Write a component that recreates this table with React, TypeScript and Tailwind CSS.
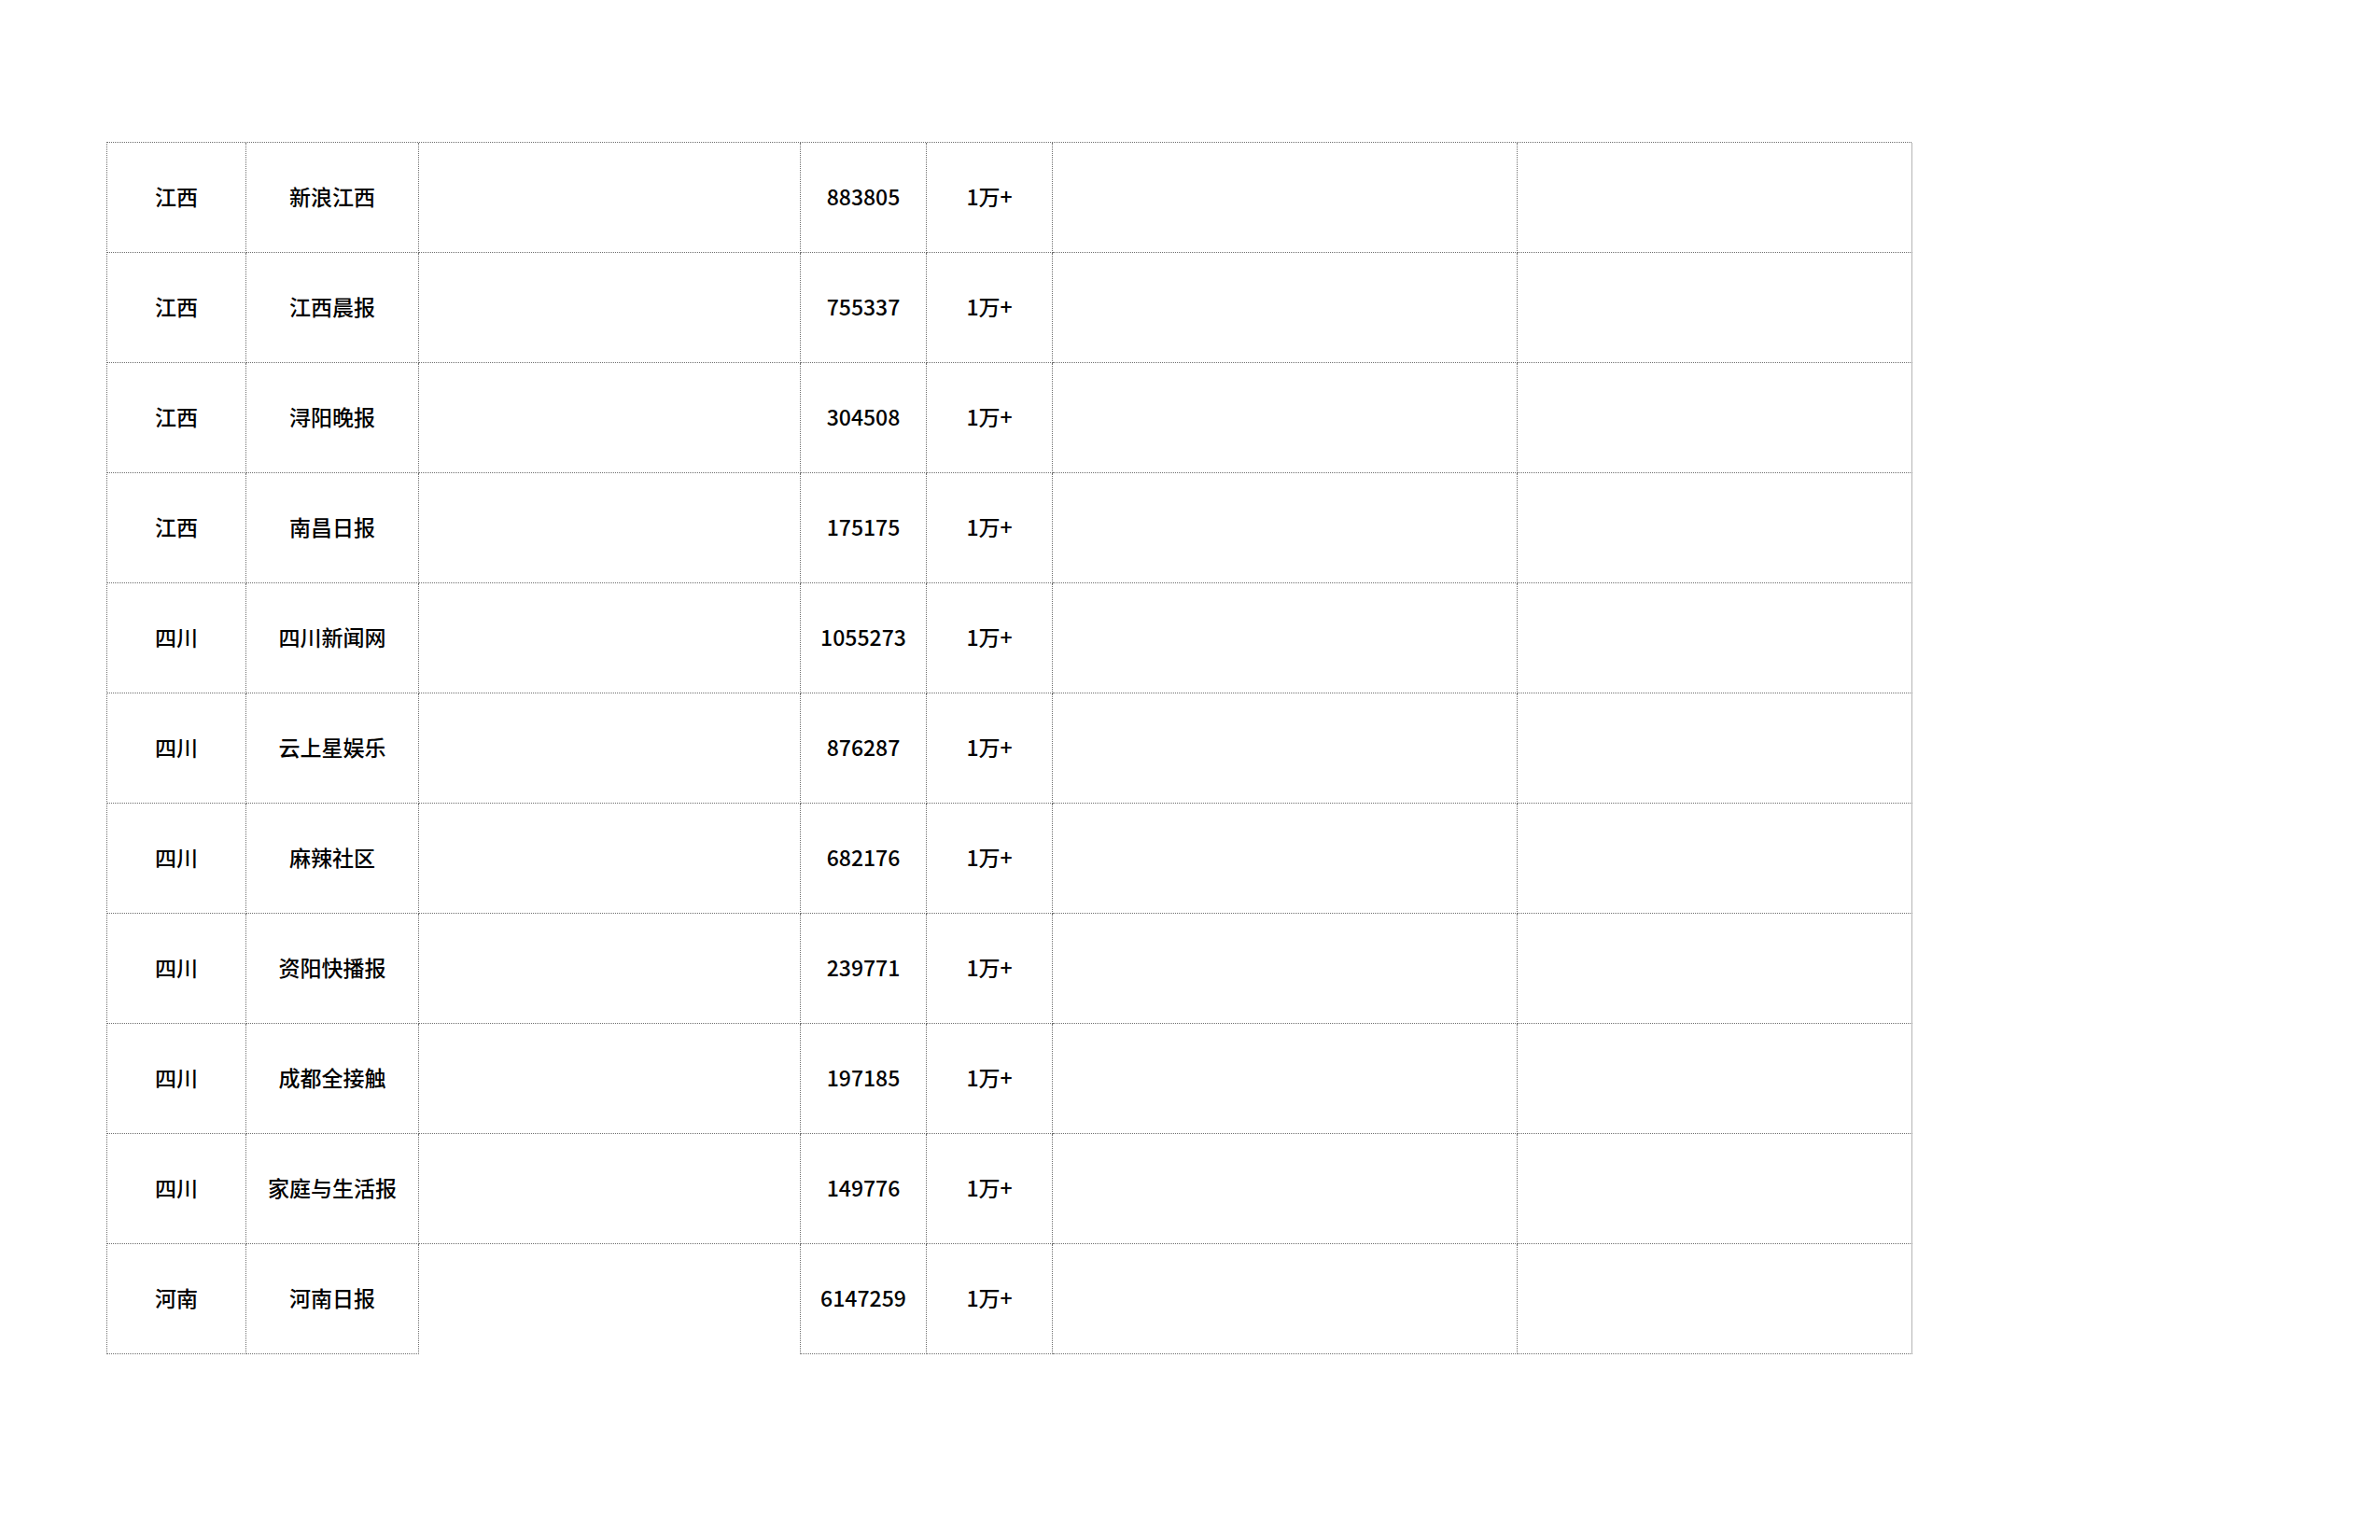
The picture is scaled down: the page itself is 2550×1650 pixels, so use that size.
import React from 'react';

type Row = { province: string; name: string; count: string; fans: string };

const rows: Row[] = [
  { province: '江西', name: '新浪江西', count: '883805', fans: '1万+' },
  { province: '江西', name: '江西晨报', count: '755337', fans: '1万+' },
  { province: '江西', name: '浔阳晚报', count: '304508', fans: '1万+' },
  { province: '江西', name: '南昌日报', count: '175175', fans: '1万+' },
  { province: '四川', name: '四川新闻网', count: '1055273', fans: '1万+' },
  { province: '四川', name: '云上星娱乐', count: '876287', fans: '1万+' },
  { province: '四川', name: '麻辣社区', count: '682176', fans: '1万+' },
  { province: '四川', name: '资阳快播报', count: '239771', fans: '1万+' },
  { province: '四川', name: '成都全接触', count: '197185', fans: '1万+' },
  { province: '四川', name: '家庭与生活报', count: '149776', fans: '1万+' },
  { province: '河南', name: '河南日报', count: '6147259', fans: '1万+' },
];

const cell =
  'h-[118px] pb-[2px] flex items-center justify-center border-r border-b border-dotted border-[#6f6f6f]';

const App: React.FC = () => {
  return (
    <div
      className="w-[2550px] h-[1650px] bg-white text-black pt-[152px] pl-[114px]"
      style={{ fontFamily: '"Noto Sans CJK SC", "Noto Sans", sans-serif' }}
    >
      <div className="grid grid-cols-[149px_185px_409px_135px_135px_498px_423px] w-[1934px] border-l border-t border-dotted border-[#6f6f6f] text-[23px] font-medium leading-none">
        {rows.map((row, i) => {
          const last = i === rows.length - 1;
          return (
            <React.Fragment key={i}>
              <div className={cell}>{row.province}</div>
              <div className={cell}>{row.name}</div>
              <div
                className={
                  last
                    ? 'h-[118px] border-r border-dotted border-[#6f6f6f]'
                    : cell
                }
              />
              <div className={cell}>{row.count}</div>
              <div className={cell}>{row.fans}</div>
              <div className={cell} />
              <div className="h-[118px] border-b border-dotted border-[#6f6f6f] border-r [border-right-style:solid] border-r-[#b5b5b5]" />
            </React.Fragment>
          );
        })}
      </div>
    </div>
  );
};

export default App;
